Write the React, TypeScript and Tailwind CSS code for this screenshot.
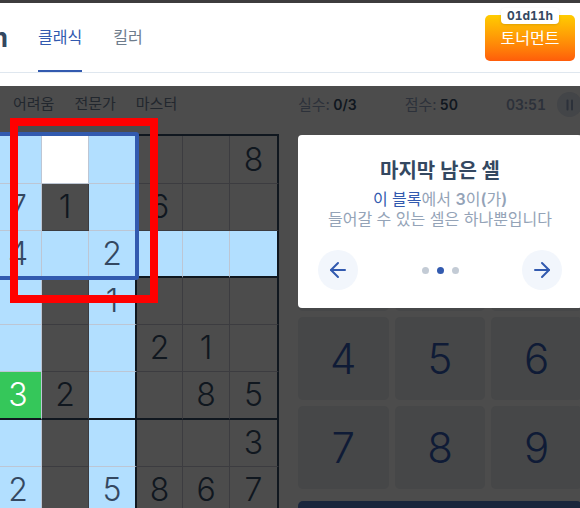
import {ArrowLeft, ArrowRight} from 'lucide-react'
import clsx from 'clsx'

type CellState = 'dim' | 'lit' | 'target' | 'match'

const BOARD = ['.....8', '71.6..', '4.2...', '..1...', '...21.', '32..85', '.....3', '2.5867']

function getCellState(row: number, col: number): CellState {
  if (row === 0 && col === 1) return 'target'
  if (row === 5 && col === 0) return 'match'
  if (row === 2 || col === 0 || col === 2) return 'lit'
  return 'dim'
}

const cellStyles: Record<CellState, string> = {
  dim: 'bg-[#4c4c4c] text-[#10171f]',
  lit: 'bg-[#b2dfff] text-[#344861]',
  target: 'bg-white text-[#344861]',
  match: 'bg-[#35c75a] text-white',
}

function Header() {
  return (
    <header className="flex h-[70px] shrink-0 items-center border-b border-[#dfe7ef] bg-white">
      <a
        href="#"
        className="flex w-2 shrink-0 justify-end text-[26px] leading-8 font-bold text-[#344861]"
      >
        m
      </a>
      <nav className="ml-[30px] flex h-full gap-[31px]">
        <a href="#classic" className="flex items-center border-b-2 border-[#325aaf] text-[#325aaf]">
          클래식
        </a>
        <a href="#killer" className="flex items-center border-b-2 border-transparent text-[#6e7c8c]">
          킬러
        </a>
      </nav>
      <button
        type="button"
        className="relative mr-[5px] ml-auto h-[46px] w-[90px] rounded-[5px] bg-linear-to-b from-[#ffcc00] to-[#ff5c0a] text-white"
      >
        <span className="absolute inset-x-4 -top-[7px] h-4 rounded-[4px] bg-white text-center text-xs leading-4 font-bold text-[#344861] tabular-nums shadow-sm">
          01d11h
        </span>
        토너먼트
      </button>
    </header>
  )
}

function Board() {
  return (
    <div className="relative -ml-[5px] w-[284px]">
      <table
        aria-label="스도쿠"
        className="w-full table-fixed border-separate border-spacing-0 border-t-2 border-[#10171f]"
      >
        <colgroup>
          <col className="w-[47px]" />
          <col className="w-[47px]" />
          <col className="w-12" />
          <col className="w-[46px]" />
          <col className="w-[47px]" />
          <col className="w-[49px]" />
        </colgroup>
        <tbody>
          {BOARD.map((line, row) => (
            <tr key={row}>
              {line.split('').map((value, col) => {
                const state = getCellState(row, col)
                const thin = state === 'dim' ? '#3c3c40' : '#bdc6d4'
                const thickRight = col % 3 === 2
                const thickBottom = row % 3 === 2
                return (
                  <td
                    key={col}
                    className={clsx(
                      'p-0 text-center align-middle text-[32px] leading-8 font-light',
                      cellStyles[state],
                      thickRight ? 'border-r-2' : 'border-r',
                      thickBottom ? 'border-b-2' : 'border-b',
                      row === 0 || row === 5 ? 'h-12' : 'h-[47px]',
                    )}
                    style={{
                      borderRightColor: thickRight ? '#10171f' : thin,
                      borderBottomColor: thickBottom ? '#10171f' : thin,
                    }}
                  >
                    {value === '.' ? '' : value}
                  </td>
                )
              })}
            </tr>
          ))}
        </tbody>
      </table>
      <div
        aria-hidden="true"
        className="absolute -top-0.5 -left-1 h-[148px] w-[148px] rounded-[3px] border-4 border-[#325aaf]"
      />
    </div>
  )
}

function Stats() {
  return (
    <div className="flex h-[37px] items-center justify-between text-[15px] leading-5 text-[#2c313a]">
      <span>
        실수: <b className="-ml-px text-sm font-semibold text-[#10171f]">0/3</b>
      </span>
      <span>
        점수: <b className="-ml-px text-sm font-semibold text-[#10171f]">50</b>
      </span>
      <span className="flex items-center gap-[11px]">
        <span className="text-sm font-semibold tabular-nums">03:51</span>
        <button
          type="button"
          aria-label="일시 정지"
          className="flex size-[25px] items-center justify-center rounded-full bg-[#434548]"
        >
          <svg viewBox="0 0 8 12" className="h-3 w-2" fill="#2c313a">
            <rect x="0.5" y="0.5" width="2" height="11" rx="1" />
            <rect x="5" y="0.5" width="2" height="11" rx="1" />
          </svg>
        </button>
      </span>
    </div>
  )
}

function HintCard() {
  const arrowButton =
    'flex size-10 items-center justify-center rounded-full bg-[#f2f6fc] text-[#325aaf]'

  return (
    <section className="absolute inset-x-0 top-[49px] rounded-[4px] bg-white px-5 pt-[21px] pb-[18px] text-center">
      <h2 className="text-xl leading-[30px] font-bold text-[#344861]">마지막 남은 셀</h2>
      <p className="mt-[3px] text-base leading-5 text-[#94a3b7]">
        <span className="text-[#325aaf]">이 블록</span>에서 <b className="font-semibold">3</b>이
        <b className="font-semibold">(</b>가<b className="font-semibold">)</b>
        <br />
        들어갈 수 있는 셀은 하나뿐입니다
      </p>
      <div className="mt-[21px] flex items-center justify-between">
        <button type="button" aria-label="이전" className={arrowButton}>
          <ArrowLeft size={24} />
        </button>
        <div className="flex gap-2">
          <span className="size-[7px] rounded-full bg-[#c3cbd5]" />
          <span className="size-[7px] rounded-full bg-[#325aaf]" />
          <span className="size-[7px] rounded-full bg-[#c3cbd5]" />
        </div>
        <button type="button" aria-label="다음" className={arrowButton}>
          <ArrowRight size={24} />
        </button>
      </div>
    </section>
  )
}

function Keypad() {
  return (
    <>
      <div className="mt-[105px] grid grid-cols-3 gap-1.5">
        {[1, 2, 3, 4, 5, 6, 7, 8, 9].map((n) => (
          <button
            key={n}
            type="button"
            className="h-[83px] rounded-[5px] bg-[#464748] text-[42px] leading-10 font-light text-[#0f1b36]"
          >
            {n}
          </button>
        ))}
      </div>
      <button
        type="button"
        aria-label="새 게임"
        className="mt-3 h-12 w-full rounded-[5px] bg-[#1a263c]"
      />
    </>
  )
}

export default function App() {
  return (
    <div className="relative flex h-screen flex-col overflow-hidden border-t-[3px] border-[#3d3c3d] bg-white font-[Inter,'Noto_Sans_CJK_KR',sans-serif] text-base">
      <Header />
      <main className="mt-[13px] flex min-h-0 flex-1 items-start bg-[#4c4c4c]">
        <div className="shrink-0">
          <nav className="flex h-12 items-start gap-5 pt-2 pl-[13px] text-[15px] leading-5 text-[#22272e]">
            <a href="#hard">어려움</a>
            <a href="#expert">전문가</a>
            <a href="#master">마스터</a>
          </nav>
          <Board />
        </div>
        <div className="relative -mr-0.5 ml-[19px] flex-1">
          <Stats />
          <Keypad />
          <HintCard />
        </div>
      </main>
      <div
        aria-hidden="true"
        className="absolute top-[115px] left-[10px] h-[185px] w-[148px] border-8 border-[#ff0000]"
      />
    </div>
  )
}
